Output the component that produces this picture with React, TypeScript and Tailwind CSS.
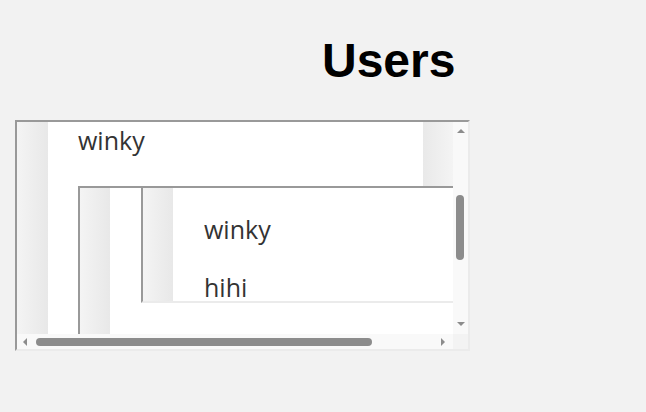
import React from 'react';

// small arrow glyphs used by the fake scrollbar buttons
const Arrow = ({ dir }: { dir: 'up' | 'down' | 'left' | 'right' }) => {
    const pts = {
        up: '0,4 4,0 8,4',
        down: '0,0 8,0 4,4',
        left: '4,0 4,8 0,4',
        right: '0,0 0,8 4,4'
    }[dir];
    const vertical = dir === 'up' || dir === 'down';
    return (
        <svg width={vertical ? 8 : 4} height={vertical ? 4 : 8} viewBox={vertical ? '0 0 8 4' : '0 0 4 8'}>
            <polygon points={pts} fill="#8c8c8c" />
        </svg>
    );
};

const Item = ({ children, className = '' }: { children: React.ReactNode; className?: string }) => (
    <div className={`text-[25px] text-[#333] ${className}`} style={{ fontFamily: '"Open Sans", sans-serif' }}>
        {children}
    </div>
);

const App: React.FC = () => {
    return (
        <div className="min-h-[412px] w-full bg-[#f2f2f2]">
            <h1
                className="pt-[37px] pl-[322px] text-[48px] leading-[48px] font-bold text-black"
                style={{ fontFamily: '"Liberation Sans", Arial, sans-serif' }}
            >
                Users
            </h1>

            {/* scroll box */}
            <div className="mt-[35px] ml-[15px] w-[455px] h-[231px] border-2 border-t-[#999] border-l-[#999] border-r-[#ebebeb] border-b-[#ebebeb]">
                <div className="grid grid-cols-[436px_15px] grid-rows-[212px_15px]">
                    {/* viewport */}
                    <div className="flex overflow-hidden bg-white">
                        <div className="w-[31px] shrink-0 bg-linear-to-r from-[#f4f4f4] to-[#e8e8e8]" />
                        <div className="flex flex-1 flex-col pl-[30px]">
                            <div className="flex h-[64px] shrink-0">
                                <Item className="flex-1 leading-[37px]">winky</Item>
                                <div className="w-[30px] shrink-0 bg-linear-to-r from-[#e9e9e9] to-[#f4f4f4]" />
                            </div>

                            {/* nested list */}
                            <div className="flex flex-1 border-t-2 border-l-2 border-[#999] bg-white">
                                <div className="w-[30px] shrink-0 bg-linear-to-r from-[#f4f4f4] to-[#e8e8e8]" />
                                <div className="w-[31px] shrink-0" />
                                <div className="flex-1">
                                    <div className="flex h-[115px] overflow-hidden border-l-2 border-b-2 border-l-[#999] border-b-[#ebebeb]">
                                        <div className="w-[30px] shrink-0 bg-linear-to-r from-[#f4f4f4] to-[#e8e8e8]" />
                                        <div className="w-[31px] shrink-0" />
                                        <div className="flex flex-col gap-[34px] pt-[29px]">
                                            <Item className="leading-[24px]">winky</Item>
                                            <Item className="leading-[24px]">hihi</Item>
                                        </div>
                                    </div>
                                </div>
                            </div>
                        </div>
                    </div>

                    {/* vertical scrollbar */}
                    <div className="flex flex-col bg-[#f9f9f9]">
                        <div className="flex h-[15px] items-center justify-center pt-[2px]">
                            <Arrow dir="up" />
                        </div>
                        <div className="flex-1 pt-[58px] pl-[3px]">
                            <div className="h-[65px] w-[8px] rounded-full bg-[#8c8c8c]" />
                        </div>
                        <div className="flex h-[15px] items-center justify-center pb-[6px]">
                            <Arrow dir="down" />
                        </div>
                    </div>

                    {/* horizontal scrollbar */}
                    <div className="flex items-center bg-[#f9f9f9]">
                        <div className="flex w-[15px] justify-center pl-[1px]">
                            <Arrow dir="left" />
                        </div>
                        <div className="flex-1 pl-[4px]">
                            <div className="h-[8px] w-[336px] rounded-full bg-[#8c8c8c]" />
                        </div>
                        <div className="flex w-[15px] justify-center pr-[5px]">
                            <Arrow dir="right" />
                        </div>
                    </div>

                    <div className="bg-[#f3f3f3]" />
                </div>
            </div>
        </div>
    );
};

export default App;
